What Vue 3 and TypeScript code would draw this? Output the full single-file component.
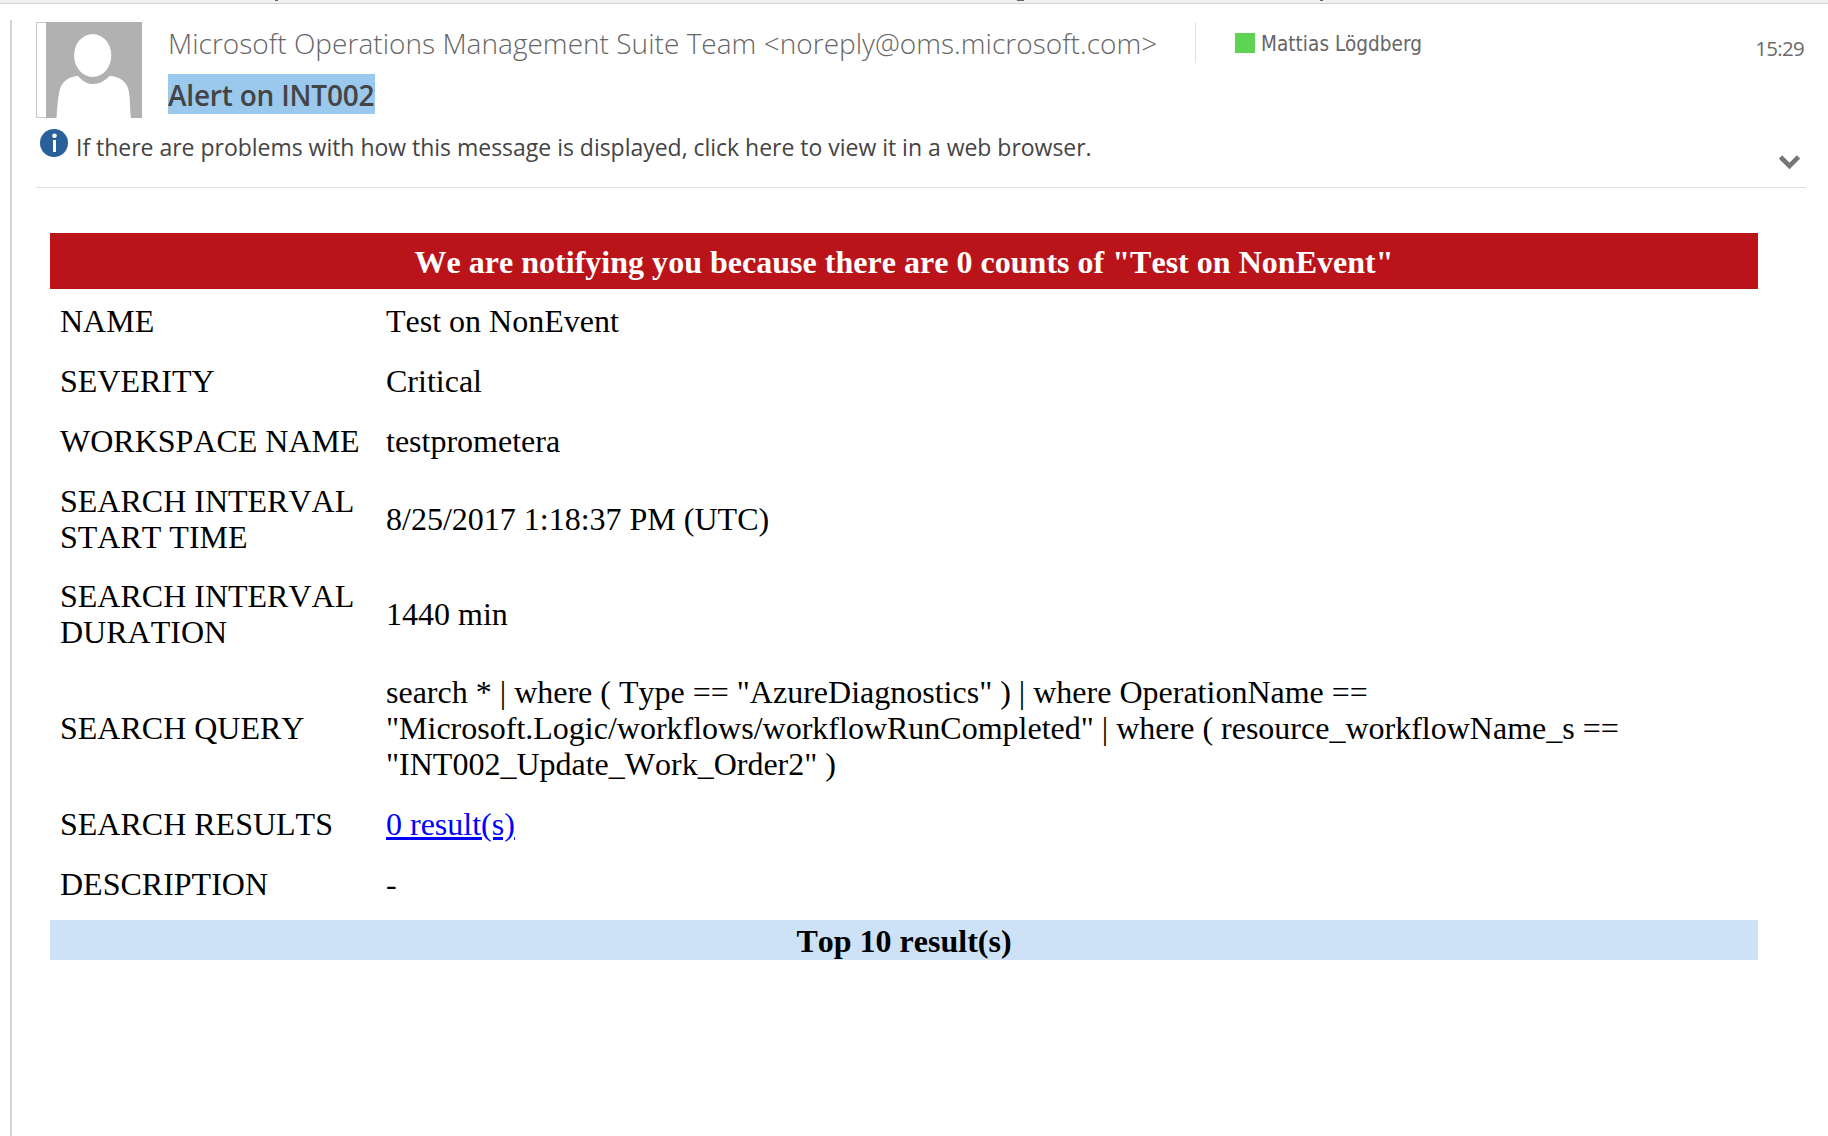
<script setup lang="ts">
interface Field {
  label: string[]
  value: string[]
  link?: boolean
}

const fields: Field[] = [
  { label: ['NAME'], value: ['Test on NonEvent'] },
  { label: ['SEVERITY'], value: ['Critical'] },
  { label: ['WORKSPACE NAME'], value: ['testprometera'] },
  { label: ['SEARCH INTERVAL', 'START TIME'], value: ['8/25/2017 1:18:37 PM (UTC)'] },
  { label: ['SEARCH INTERVAL', 'DURATION'], value: ['1440 min'] },
  {
    label: ['SEARCH QUERY'],
    value: [
      'search * | where ( Type == "AzureDiagnostics" ) | where OperationName ==',
      '"Microsoft.Logic/workflows/workflowRunCompleted" | where ( resource_workflowName_s ==',
      '"INT002_Update_Work_Order2" )',
    ],
  },
  { label: ['SEARCH RESULTS'], value: ['0 result(s)'], link: true },
  { label: ['DESCRIPTION'], value: ['-'] },
]
</script>

<template>
  <main class="window">
    <div class="ribbon">
      <svg width="1828" height="1" viewBox="0 0 1828 1"><path d="M275 0h3v1h-3zM1017 0h7v1h-7zM1320 0h3v1h-3z" fill="#666" /></svg>
    </div>
    <section class="pane">
      <header class="head">
        <svg class="avatar" width="106" height="96" viewBox="0 0 106 96">
          <path d="M10 .5H.5v95H10" fill="none" stroke="#c6c6c6" />
          <path d="M10 0h96v96H10z" fill="#b1b1b1" />
          <ellipse cx="56.7" cy="33.5" rx="18.6" ry="21.5" fill="#fff" />
          <path d="M20.5 96C21.5 83 22 75 24 67C26.500 58 35 54.300 42 54C47 59.500 51 62 57 62C64 62 69 58.500 73.500 54C81 54.300 89 57.500 92 66C94.500 74 93.500 84 95 96z" fill="#fff" />
        </svg>
        <div class="titles">
          <div class="sender">Microsoft Operations Management Suite Team &lt;noreply@oms.microsoft.com&gt;</div>
          <div><span class="subject">Alert on INT002</span></div>
        </div>
        <div class="recipient"><i class="presence"></i><span>Mattias Lögdberg</span></div>
        <time class="time">15:29</time>
      </header>
      <div class="notice">
        <svg class="info" width="28" height="28" viewBox="0 0 28 28">
          <circle cx="14" cy="14" r="14" fill="#2a6099" />
          <circle cx="14.500" cy="6.700" r="2.300" fill="#fff" />
          <path d="M13 11h3v12h-3z" fill="#fff" />
        </svg>
        <span class="notice-text">If there are problems with how this message is displayed, click here to view it in a web browser.</span>
        <svg class="chevron" width="22" height="15" viewBox="0 0 22 15">
          <path d="M2.500 2l9 9 9-9" fill="none" stroke="#767676" stroke-width="4.600" />
        </svg>
      </div>
      <article class="mail">
        <h1 class="alert">We are notifying you because there are 0 counts of "Test on NonEvent"</h1>
        <dl class="fields">
          <div v-for="(f, i) in fields" :key="i" class="row">
            <dt><div v-for="l in f.label" :key="l">{{ l }}</div></dt>
            <dd>
              <a v-if="f.link" href="#">{{ f.value[0] }}</a>
              <template v-else><div v-for="l in f.value" :key="l">{{ l }}</div></template>
            </dd>
          </div>
        </dl>
        <h2 class="top">Top 10 result(s)</h2>
      </article>
    </section>
  </main>
</template>

<style>
body { margin: 0; background: #fff; }
</style>

<style scoped>
.window { width: 1828px; height: 1136px; overflow: hidden; display: flex; flex-direction: column; background: #fff; font-family: "Open Sans", sans-serif; }
.ribbon { height: 3px; background: #f0f0f0; border-bottom: 1px solid #d4d4d4; margin-bottom: 16px; }
.ribbon svg { display: block; }
.pane { flex: 1; border-left: 2px solid #d4d4d4; margin-left: 10px; padding: 2px 22px 0 24px; }
.head { display: flex; height: 96px; }
.avatar { flex: none; }
.titles { margin-left: 26px; width: 1027px; white-space: nowrap; color: #666; }
.sender { font-size: 28px; font-weight: 300; line-height: 42px; height: 52px; letter-spacing: 0.03px; }
.subject { display: inline-block; height: 40px; line-height: 42px; background: #9ac9ed; color: #444; font-size: 28px; font-weight: 600; width: 207px; letter-spacing: -0.2px; }
.recipient { box-sizing: border-box; height: 41px; border-left: 1px solid #e1e1e1; padding: 11px 0 0 39px; display: flex; color: #666; font-family: "DejaVu Sans Condensed", "DejaVu Sans", sans-serif; font-stretch: condensed; font-size: 20.5px; letter-spacing: 0.05px; line-height: 23px; white-space: nowrap; }
.presence { width: 20px; height: 20px; background: #5fd353; margin-right: 6px; }
.time { margin-left: auto; margin-right: 2px; margin-top: 11px; color: #6a6a6a; font-size: 20.5px; line-height: 30px; letter-spacing: -0.7px; }
.notice { display: flex; height: 69px; border-bottom: 1px solid #e1e1e1; color: #444; }
.info { margin: 11px 8px 0 4px; }
.notice-text { font-size: 23px; line-height: 34px; margin-top: 12px; white-space: nowrap; letter-spacing: -0.02px; }
.chevron { margin: 37px 6px 0 auto; }
.mail { width: 1708px; margin: 45px 0 0 14px; font-family: "Liberation Serif", serif; font-size: 32px; line-height: 36px; color: #000; font-kerning: none; }
.alert { margin: 0; height: 56px; line-height: 58px; background: #ba141a; color: #fff; font-size: 32px; text-align: center; letter-spacing: 0.02px; }
.fields { margin: 0; padding: 2px 0 6px; }
.row { display: flex; align-items: center; padding: 12px 10px; }
.row:nth-child(4) { padding-bottom: 11px; }
dt { width: 326px; white-space: nowrap; }
dd { margin: 0; white-space: nowrap; }
a { color: #00f; }
.top { margin: 0; height: 40px; line-height: 42px; background: #cde2f6; font-size: 32px; text-align: center; }
</style>
